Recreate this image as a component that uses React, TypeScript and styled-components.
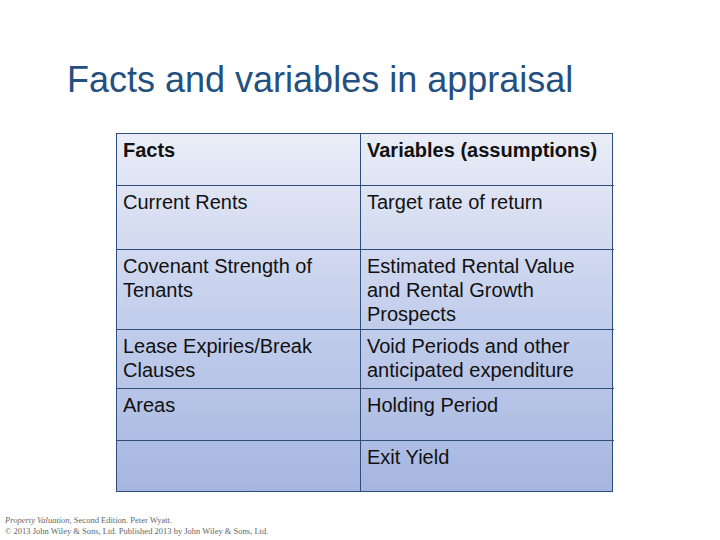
import styled, { createGlobalStyle } from 'styled-components';

const GlobalStyle = createGlobalStyle`
  body {
    margin: 0;
    background: #ffffff;
  }
`;

const StyledSlide = styled.div`
  position: relative;
  display: flex;
  flex-direction: column;
  width: 720px;
  height: 540px;
  overflow: hidden;
  background: #ffffff;
`;

const StyledTitle = styled.h1`
  margin: 60px 0 0 67px;
  font-family: 'Liberation Sans', Arial, sans-serif;
  font-weight: 400;
  font-size: 36px;
  line-height: 40px;
  color: #24507f;
`;

const StyledTable = styled.div`
  margin: 33px 0 0 116px;
  width: 497px;
  display: grid;
  grid-template-columns: 244px 253px;
  border: 1px solid #2f4d7a;
  box-sizing: border-box;
  background: linear-gradient(180deg, #eaedf7 0%, #c4cfec 50%, #a6b6e0 100%);
`;

interface cellType {
  height: number;
  isHeader?: boolean;
  lastCol?: boolean;
  lastRow?: boolean;
}

const StyledCell = styled.div<cellType>`
  height: ${(props) => props.height}px;
  box-sizing: border-box;
  padding: 4px 8px 0 6px;
  font-family: 'Liberation Sans', Arial, sans-serif;
  font-size: 20px;
  line-height: 24px;
  font-weight: ${(props) => (props.isHeader ? 700 : 400)};
  color: #111111;
  border-right: ${(props) => (props.lastCol ? 'none' : '1px solid #2f4d7a')};
  border-bottom: ${(props) => (props.lastRow ? 'none' : '1px solid #2f4d7a')};
`;

const StyledFooter = styled.div`
  position: absolute;
  left: 5px;
  bottom: 3px;
  font-family: 'Liberation Serif', 'Times New Roman', serif;
  font-size: 8.5px;
  line-height: 11px;
  color: #666666;
`;

const rows: { facts: string; variables: string; height: number }[] = [
  { facts: 'Facts', variables: 'Variables (assumptions)', height: 52 },
  { facts: 'Current Rents', variables: 'Target rate of return', height: 64 },
  {
    facts: 'Covenant Strength of Tenants',
    variables: 'Estimated Rental Value and Rental Growth Prospects',
    height: 80,
  },
  {
    facts: 'Lease Expiries/Break Clauses',
    variables: 'Void Periods and other anticipated expenditure',
    height: 59,
  },
  { facts: 'Areas', variables: 'Holding Period', height: 52 },
  { facts: '', variables: 'Exit Yield', height: 50 },
];

export default function App() {
  return (
    <StyledSlide>
      <GlobalStyle />
      <StyledTitle>Facts and variables in appraisal</StyledTitle>
      <StyledTable>
        {rows.map((row, i) => {
          const lastRow = i === rows.length - 1;
          return [
            <StyledCell
              key={`f${i}`}
              height={row.height}
              isHeader={i === 0}
              lastRow={lastRow}
            >
              {row.facts}
            </StyledCell>,
            <StyledCell
              key={`v${i}`}
              height={row.height}
              isHeader={i === 0}
              lastCol
              lastRow={lastRow}
            >
              {row.variables}
            </StyledCell>,
          ];
        })}
      </StyledTable>
      <StyledFooter>
        <i>Property Valuation</i>, Second Edition. Peter Wyatt.
        <br />© 2013 John Wiley &amp; Sons, Ltd. Published 2013 by John Wiley
        &amp; Sons, Ltd.
      </StyledFooter>
    </StyledSlide>
  );
}
